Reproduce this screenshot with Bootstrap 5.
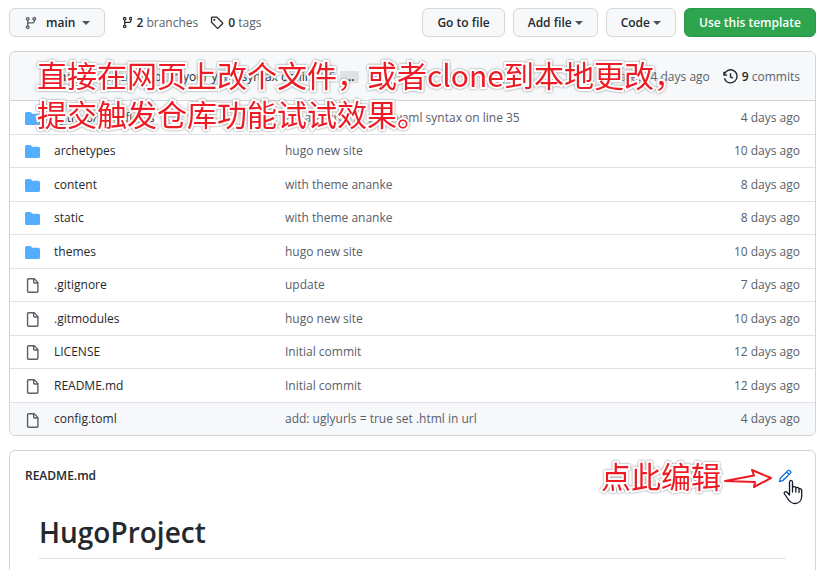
<!DOCTYPE html>
<html lang="en">
<head>
<meta charset="utf-8">
<meta name="viewport" content="width=device-width, initial-scale=1">
<title>HugoProject</title>
<link href="https://cdn.jsdelivr.net/npm/bootstrap@5.3.0/dist/css/bootstrap.min.css" rel="stylesheet">
<style>
body{font-family:"Open Sans","Noto Sans CJK SC",sans-serif;font-size:12px;line-height:18px;color:#24292e;overflow-x:hidden}
a{color:inherit;text-decoration:none}
strong{font-weight:600;color:#24292e}
svg{flex:none}
.page{padding:8px 10px 0 9px}
.toolbar .btn{--bs-btn-font-size:12px;--bs-btn-font-weight:600;--bs-btn-line-height:18px;--bs-btn-padding-y:4px;--bs-btn-padding-x:14px;--bs-btn-border-radius:6px;height:29px;white-space:nowrap}
.toolbar .btn-gh{--bs-btn-bg:#f6f8fa;--bs-btn-color:#24292e;--bs-btn-border-color:#d5d8da;--bs-btn-hover-bg:#f3f4f6;--bs-btn-hover-border-color:#d5d8da}
.toolbar .btn-tpl{--bs-btn-bg:#2ea44f;--bs-btn-color:#fff;--bs-btn-border-color:#2a9749;--bs-btn-hover-bg:#2c974b;--bs-btn-hover-color:#fff}
.toolbar .dropdown-toggle::after{border-top-width:4px;border-left-width:4px;border-right-width:4px;opacity:.8;margin-left:3px;vertical-align:2px}
.toolbar .branch::after{margin-left:7px}
.soft{color:#586069}
.box{border:1px solid #d1d5da;border-radius:6px;background:#fff}
.listing{margin-top:14px}
.latest{background:#f6f8fa;height:49px;border-bottom:1px solid #d1d5da;border-radius:6px 6px 0 0;padding:1px 15px 0}
.message{padding-left:28px}
.more{background:#dfe2e5;border-radius:1px;padding:0 5px;line-height:12px;border:0;font-weight:600;color:inherit}
.age{margin-right:13px}
.files{width:100%;table-layout:fixed}
.files td{padding:1px 15px 0 0;height:33px;border-top:1px solid #dfe3e8;color:#586069;white-space:nowrap;vertical-align:middle}
.files tr:nth-child(odd) td{height:34px}
.files tr:first-child td{border-top:0;height:33px}
.files tr:last-child td{background:#f6f8fa}
.files tr:last-child td:first-child{border-radius:0 0 0 6px}
.files tr:last-child td:last-child{border-radius:0 0 6px 0}
.files td.name{padding-left:15px}
.files .name a{color:#24292e;margin-left:14px}
.files svg{width:15px;height:15px;fill:#586069}
.files svg.dir{fill:#54aeff}
.c-name{width:275px}
.c-age{width:120px}
.readme{margin-top:14px;padding:16px 15px 40px}
.article{padding:28px 14px 0}
.article h1{font-size:28px;line-height:38px;font-weight:600;border-bottom:1px solid #dfe3e8;padding-bottom:7px;margin:0}
.note{color:#ed1c24;font-family:"Noto Sans CJK SC",sans-serif;font-size:30px;line-height:39px;white-space:nowrap;paint-order:stroke fill;-webkit-text-stroke:4px #fff;filter:drop-shadow(0 0 1px #888);pointer-events:none}
.note-top{left:27px;top:3px}
.note-edit{right:94px;top:5px}
.arrow{right:42px;top:17px}
.hand{right:12px;top:27px}
</style>
<script src="https://cdn.jsdelivr.net/npm/bootstrap@5.3.0/dist/js/bootstrap.bundle.min.js" defer></script>
</head>
<body>
<svg class="d-none" aria-hidden="true">
<symbol id="i-branch" viewBox="0 0 16 16"><path fill-rule="evenodd" d="M11.75 2.5a.75.75 0 100 1.5.75.75 0 000-1.5zm-2.25.75a2.25 2.25 0 113 2.122V6A2.5 2.5 0 0110 8.5H6a1 1 0 00-1 1v1.128a2.251 2.251 0 11-1.5 0V5.372a2.25 2.25 0 111.5 0v1.836A2.492 2.492 0 016 7h4a1 1 0 001-1v-.628A2.25 2.25 0 019.5 3.25zM4.25 12a.75.75 0 100 1.5.75.75 0 000-1.5zM3.5 3.25a.75.75 0 111.5 0 .75.75 0 01-1.5 0z"/></symbol>
<symbol id="i-dir" viewBox="0 0 16 16"><path d="M1.75 1A1.75 1.75 0 000 2.75v10.5C0 14.216.784 15 1.75 15h12.5A1.75 1.75 0 0016 13.25v-8.5A1.75 1.75 0 0014.25 3h-6.5a.25.25 0 01-.2-.1l-.9-1.2c-.33-.44-.85-.7-1.4-.7h-3.5z"/></symbol>
<symbol id="i-file" viewBox="0 0 16 16"><path fill-rule="evenodd" d="M3.75 1.5a.25.25 0 00-.25.25v12.5c0 .138.112.25.25.25h9a.25.25 0 00.25-.25V6h-2.75A1.75 1.75 0 018.5 4.25V1.5zM10 1.9v2.35c0 .138.112.25.25.25h2.35zM2 1.75C2 .784 2.784 0 3.75 0h5.59c.464 0 .909.184 1.237.513l3.41 3.41c.329.328.513.773.513 1.237v9.09A1.75 1.75 0 0112.75 16h-9A1.75 1.75 0 012 14.25z"/></symbol>
</svg>
<main class="page">
<div class="toolbar d-flex align-items-center">
  <button type="button" class="btn btn-gh branch dropdown-toggle d-flex align-items-center"><svg class="soft me-2" width="14" height="14" fill="currentColor"><use href="#i-branch"/></svg>main</button>
  <a href="#" class="d-flex align-items-center ms-3 gap-1"><svg width="11" height="13" viewBox="0 0 13 16" fill="currentColor"><use href="#i-branch" width="16" height="16"/></svg><span class="soft"><strong>2</strong> branches</span></a>
  <a href="#" class="d-flex align-items-center gap-1"><svg class="ms-2 ps-1" width="18" height="15" viewBox="0 0 16 16" fill="none" stroke="currentColor" stroke-width="1.5"><path d="M1.75 7.75v-5a1 1 0 011-1h5L14.3 8.3a.8.8 0 010 1.100l-5 5a.8.8 0 01-1.100 0z"/><circle cx="5" cy="5" r=".4"/></svg><span class="soft"><strong>0</strong> tags</span></a>
  <div class="d-flex gap-2 ms-auto">
    <button type="button" class="btn btn-gh">Go to file</button>
    <button type="button" class="btn btn-gh dropdown-toggle">Add file</button>
    <button type="button" class="btn btn-gh dropdown-toggle">Code</button>
    <button type="button" class="btn btn-tpl">Use this template</button>
  </div>
</div>
<section class="box listing position-relative">
  <div class="latest d-flex align-items-center">
    <span class="message text-nowrap"><strong>zhaolee</strong> fix: an error in your yaml syntax on line 35</span>
    <button type="button" class="more ms-1" aria-label="Show full message">…</button>
    <span class="soft ms-auto age">Latest 4 days ago</span>
    <a href="#" class="d-flex align-items-center gap-1"><svg width="15" height="15" viewBox="0 0 16 16" fill="none" stroke="currentColor" stroke-width="1.5"><path d="M1.200 7A6.900 6.900 0 111.500 10M1 3v3.500h3.500M8 4.500v4l2.600 1.200"/></svg><span class="soft"><strong>9</strong> commits</span></a>
  </div>
  <table class="files">
    <colgroup><col class="c-name"><col><col class="c-age"></colgroup>
    <tbody>
    <tr><td class="name"><svg class="dir"><use href="#i-dir"/></svg><a href="#">.github/workflows</a></td><td>fix: an error in your yaml syntax on line 35</td><td class="text-end">4 days ago</td></tr>
    <tr><td class="name"><svg class="dir"><use href="#i-dir"/></svg><a href="#">archetypes</a></td><td>hugo new site</td><td class="text-end">10 days ago</td></tr>
    <tr><td class="name"><svg class="dir"><use href="#i-dir"/></svg><a href="#">content</a></td><td>with theme ananke</td><td class="text-end">8 days ago</td></tr>
    <tr><td class="name"><svg class="dir"><use href="#i-dir"/></svg><a href="#">static</a></td><td>with theme ananke</td><td class="text-end">8 days ago</td></tr>
    <tr><td class="name"><svg class="dir"><use href="#i-dir"/></svg><a href="#">themes</a></td><td>hugo new site</td><td class="text-end">10 days ago</td></tr>
    <tr><td class="name"><svg><use href="#i-file"/></svg><a href="#">.gitignore</a></td><td>update</td><td class="text-end">7 days ago</td></tr>
    <tr><td class="name"><svg><use href="#i-file"/></svg><a href="#">.gitmodules</a></td><td>hugo new site</td><td class="text-end">10 days ago</td></tr>
    <tr><td class="name"><svg><use href="#i-file"/></svg><a href="#">LICENSE</a></td><td>Initial commit</td><td class="text-end">12 days ago</td></tr>
    <tr><td class="name"><svg><use href="#i-file"/></svg><a href="#">README.md</a></td><td>Initial commit</td><td class="text-end">12 days ago</td></tr>
    <tr><td class="name"><svg><use href="#i-file"/></svg><a href="#">config.toml</a></td><td>add: uglyurls = true set .html in url</td><td class="text-end">4 days ago</td></tr>
    </tbody>
  </table>
  <div class="note note-top position-absolute">直接在网页上改个文件，或者clone到本地更改，<br>提交触发仓库功能试试效果。</div>
</section>
<section class="box readme position-relative">
  <div class="d-flex align-items-center justify-content-between">
    <strong>README.md</strong>
    <a href="#" class="d-flex me-2" aria-label="Edit this file"><svg width="14" height="14" viewBox="0 0 16 16" fill="none" stroke="#0969da" stroke-width="1.5"><path d="M1.800 14.200l1-3.800L11.600 1.600a1 1 0 011.400 0l1.400 1.400a1 1 0 010 1.400L5.600 13.200zM9.800 3.400l2.800 2.800"/></svg></a>
  </div>
  <article class="article"><h1>HugoProject</h1></article>
  <div class="note note-edit position-absolute">点此编辑</div>
  <svg class="arrow position-absolute" width="50" height="22" viewBox="0 0 50 22" fill="#fff" stroke="#ed1c24" stroke-width="2" stroke-linejoin="round" aria-hidden="true"><path d="M2 13L31 7.500 29 2 48 10 31 19 32 14Z"/></svg>
  <svg class="hand position-absolute" width="20" height="27" viewBox="0 0 20 27" fill="#fff" stroke="#111827" stroke-width="1.300" stroke-linejoin="round" stroke-linecap="round" aria-hidden="true"><path d="M6.500 17V4.200C6.500 1.700 9.500 1.700 9.500 4.200V9.500C10 8.200 12.800 8.500 12.800 10.200 13.500 9 16 9.300 16 11 17 10.200 18.700 10.800 18.700 12.500V18C18.700 22.500 16 25.500 12 25.500 8.500 25.500 6.500 23.500 5 21L1.500 16C.5 14.200 2.500 13 4 14.200L6.500 17M9.500 9.500V14M12.800 10.200V14M16 11V14.500"/></svg>
</section>
</main>
</body>
</html>
